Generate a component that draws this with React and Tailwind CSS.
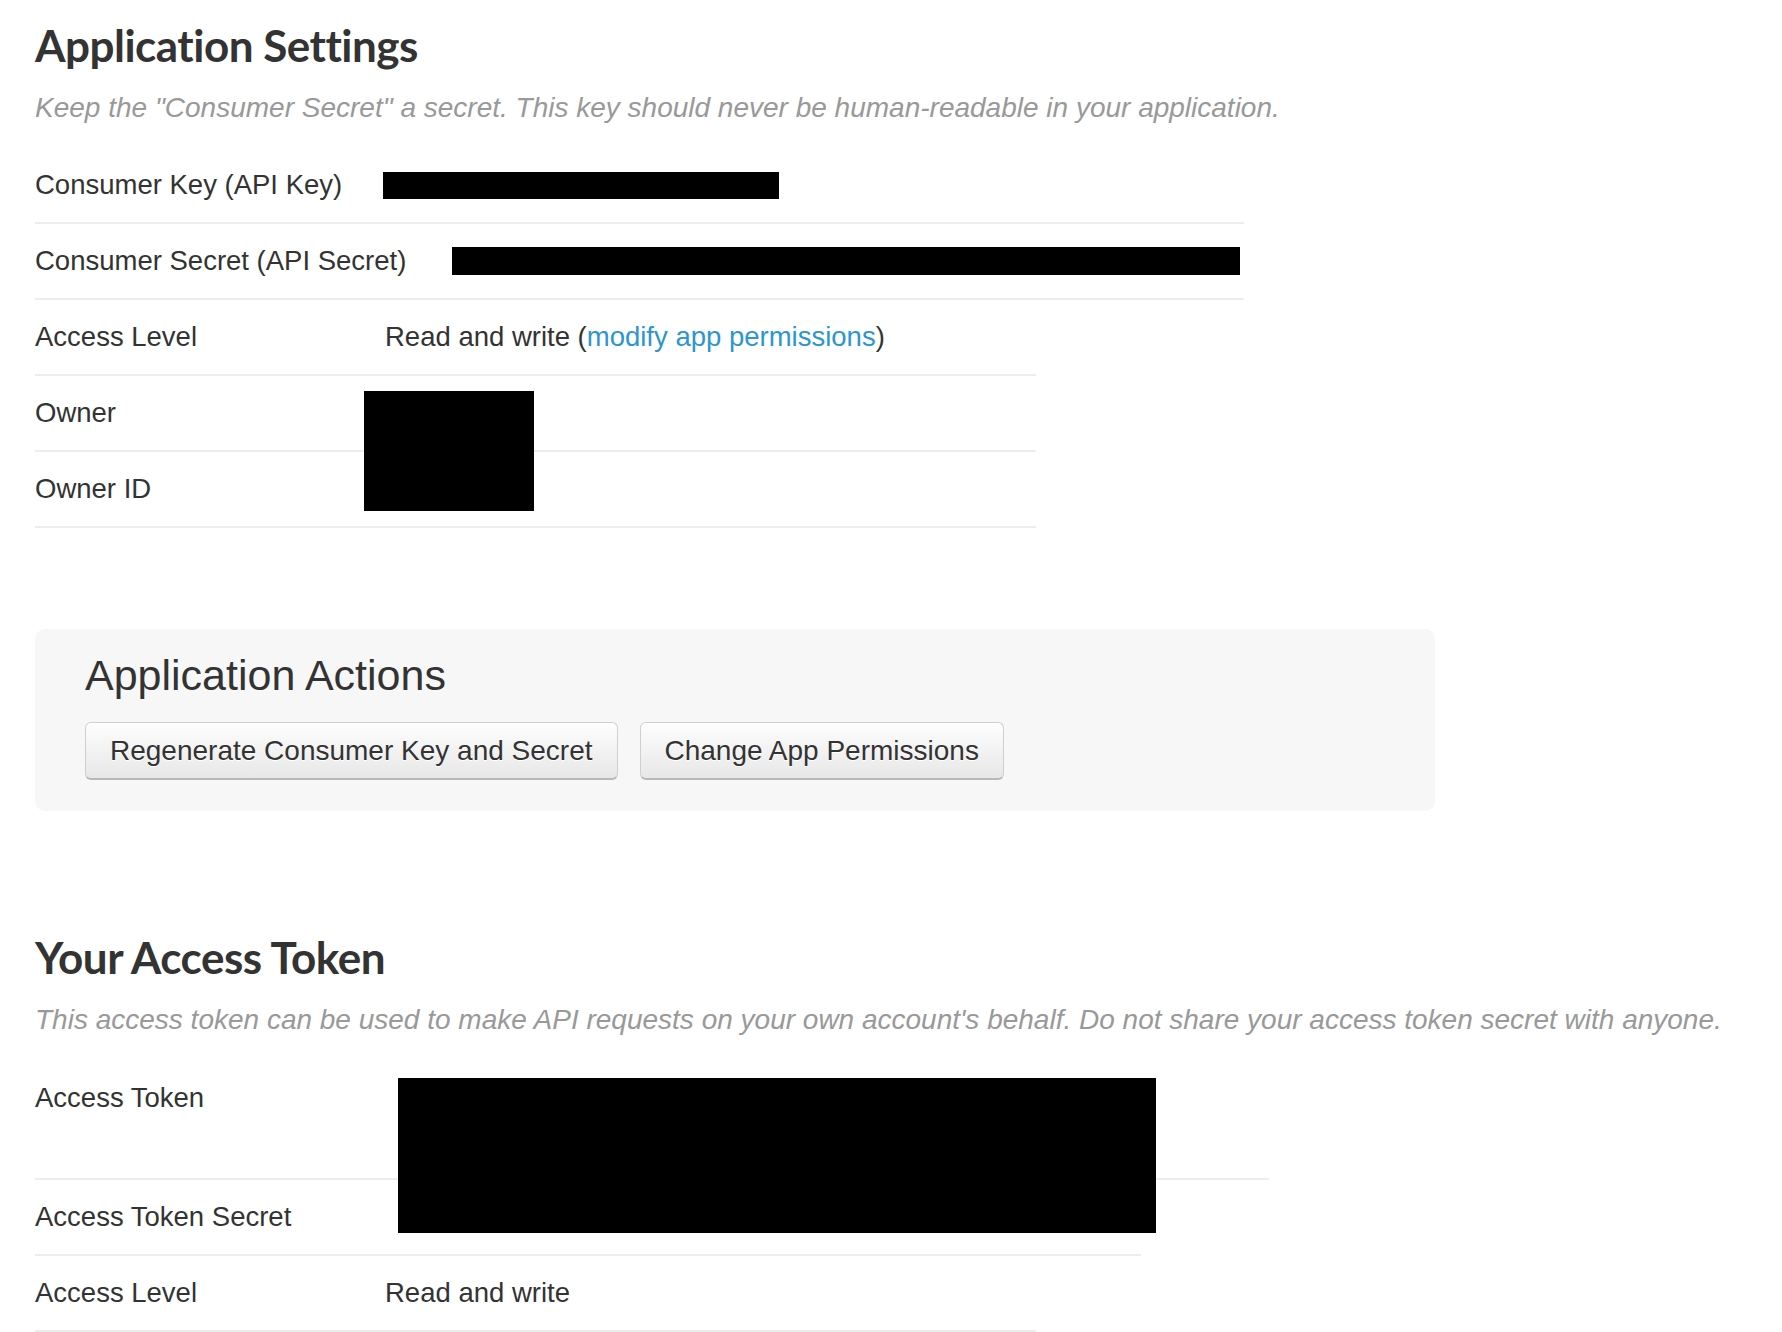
import React from "react"

const sans = { fontFamily: '"Liberation Sans", Arial, sans-serif' }

function Row({ label, width, tall, children }) {
    return (
        <div
            className={
                tall
                    ? `flex items-start h-[119px] pt-[17px] border-b-2 border-[#ededed] ${width}`
                    : `flex items-center h-[76px] border-b-2 border-[#ededed] ${width}`
            }
        >
            <div className="shrink-0 min-w-[350px] pr-[44px] text-[27.5px] leading-[40px] text-[#333]">
                {label}
            </div>
            <div className="text-[27.5px] leading-[40px] text-[#333]">{children}</div>
        </div>
    )
}

function Heading({ children, className }) {
    return (
        <h1
            className={`font-['Lato',sans-serif] font-bold text-[44px] leading-[50px] text-[#333] tracking-[-0.5px] ${className}`}
        >
            {children}
        </h1>
    )
}

function Note({ children }) {
    return (
        <p className="mt-[18px] text-[28px] leading-[40px] italic text-[#999] whitespace-nowrap">
            {children}
        </p>
    )
}

function Button({ children }) {
    return (
        <button className="h-[58px] px-[24px] rounded-[6px] border border-[#cfcfcf] border-b-2 border-b-[#b8b8b8] bg-linear-to-b from-[#fefefe] to-[#e7e7e7] text-[28px] text-[#333] text-shadow-[0_1px_0_#fff] shadow-[inset_0_1px_0_#fff]">
            {children}
        </button>
    )
}

export default function App() {
    return (
        <div className="min-h-screen bg-white px-[35px] pt-[20px]" style={sans}>
            <Heading>Application Settings</Heading>
            <Note>Keep the "Consumer Secret" a secret. This key should never be human-readable in your application.</Note>

            <div className="mt-[20px]">
                <Row label="Consumer Key (API Key)" width="w-[1209px]">
                    <span className="block w-[396px] h-[27px] -ml-[3px] bg-black" />
                </Row>
                <Row label="Consumer Secret (API Secret)" width="w-[1209px]">
                    <span className="block w-[788px] h-[28px] ml-[2px] bg-black" />
                </Row>
                <Row label="Access Level" width="w-[1001px]">
                    Read and write (
                    <a href="#" className="text-[#2b96d0]">
                        modify app permissions
                    </a>
                    )
                </Row>
                <div className="relative">
                    <Row label="Owner" width="w-[1001px]" />
                    <Row label="Owner ID" width="w-[1001px]" />
                    <span className="absolute left-[329px] top-[15px] w-[170px] h-[120px] bg-black" />
                </div>
            </div>

            <div className="mt-[101px] w-[1400px] h-[182px] rounded-[10px] bg-[#f7f7f7] pl-[50px] pt-[22px]">
                <h2 className="text-[43px] leading-[48px] text-[#333]">Application Actions</h2>
                <div className="mt-[23px] flex gap-[22px]">
                    <Button>Regenerate Consumer Key and Secret</Button>
                    <Button>Change App Permissions</Button>
                </div>
            </div>

            <Heading className="mt-[121px]">Your Access Token</Heading>
            <Note>This access token can be used to make API requests on your own account's behalf. Do not share your access token secret with anyone.</Note>

            <div className="mt-[21px]">
                <div className="relative">
                    <Row label="Access Token" width="w-[1234px]" tall />
                    <Row label="Access Token Secret" width="w-[1106px]" />
                    <span className="absolute left-[363px] top-[17px] w-[758px] h-[155px] bg-black" />
                </div>
                <Row label="Access Level" width="w-[1001px]">
                    Read and write
                </Row>
            </div>
        </div>
    )
}
